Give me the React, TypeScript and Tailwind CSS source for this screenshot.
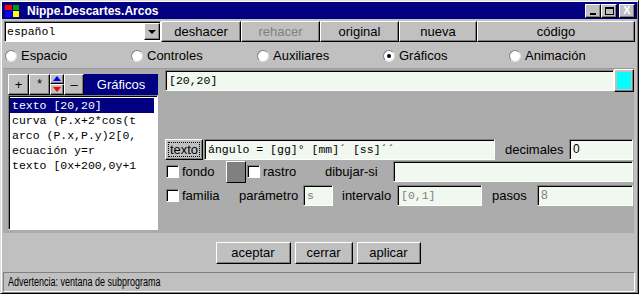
import type { ReactNode } from 'react';

const raised =
  'border border-t-white border-l-white border-r-black border-b-black shadow-[inset_-1px_-1px_0_#808080] bg-[#c0c0c0]';
const sunken =
  'border border-t-[#808080] border-l-[#808080] border-r-white border-b-white shadow-[inset_1px_1px_0_#000]';

function Btn({ w, children, disabled, className = '' }: { w: string; children: ReactNode; disabled?: boolean; className?: string }) {
  return (
    <div className={`${raised} ${w} flex items-center justify-center ${disabled ? 'text-[#808080]' : 'text-black'} ${className}`}>
      {children}
    </div>
  );
}

function Field({ w, children, gray, mono = true }: { w: string; children?: ReactNode; gray?: boolean; mono?: boolean }) {
  return (
    <div
      className={`${sunken} ${w} h-[21px] bg-[#f0f8f0] flex items-center pl-[3px] overflow-hidden whitespace-nowrap ${gray ? 'text-[#808080]' : 'text-black'} ${mono ? "font-['Liberation_Mono',monospace] text-[11.5px]" : 'text-[12px]'}`}
    >
      {children}
    </div>
  );
}

function Radio({ label, checked }: { label: string; checked?: boolean }) {
  return (
    <div className="flex items-center gap-[4px]">
      <div className="w-[12px] h-[12px] rounded-full bg-white border border-t-[#808080] border-l-[#808080] border-r-[#dfdfdf] border-b-[#dfdfdf] flex items-center justify-center">
        {checked && <div className="w-[4px] h-[4px] rounded-full bg-black" />}
      </div>
      <span>{label}</span>
    </div>
  );
}

function Check() {
  return <div className={`${sunken} w-[13px] h-[13px] bg-white`} />;
}

const items = ['texto [20,20]', 'curva (P.x+2*cos(t', 'arco (P.x,P.y)2[0,', 'ecuación y=r', 'texto [0x+200,0y+1'];

export default function App() {
  return (
    <div className="w-[639px] h-[294px] bg-[#c0c0c0] border border-t-[#dfdfdf] border-l-[#dfdfdf] border-r-black border-b-black shadow-[inset_1px_1px_0_#fff,inset_-1px_-1px_0_#808080] p-[1px] flex flex-col font-['Liberation_Sans',Arial,sans-serif] text-[13px] text-black overflow-hidden">
      {/* title bar */}
      <div className="h-[17px] bg-[#000080] flex items-center text-white">
        <div className="ml-[2px] w-[16px] h-[14px] grid grid-cols-2 gap-[1px] p-[1px]">
          <div className="bg-[#ff0000]" />
          <div className="bg-[#00a000]" />
          <div className="bg-[#0000ff]" />
          <div className="bg-[#ffff00]" />
        </div>
        <span className="ml-[7px] font-bold text-[12px]">Nippe.Descartes.Arcos</span>
        <div className="ml-auto mr-[2px] flex items-center">
          <div className={`${raised} w-[16px] h-[14px] flex items-end justify-center pb-[2px]`}>
            <div className="w-[6px] h-[2px] bg-black" />
          </div>
          <div className={`${raised} w-[16px] h-[14px] flex items-center justify-center`}>
            <div className="w-[9px] h-[8px] border border-black border-t-2" />
          </div>
          <div className={`${raised} ml-[2px] w-[16px] h-[14px] flex items-center justify-center text-[11px] font-bold leading-none`}>
            X
          </div>
        </div>
      </div>

      {/* toolbar */}
      <div className="mt-[2px] ml-[2px] h-[21px] flex">
        <div className={`${sunken} w-[157px] h-[21px] bg-white flex items-center`}>
          <span className="flex-1 pl-[2px] font-['Liberation_Mono',monospace] text-[11.5px]">español</span>
          <div className={`${raised} w-[16px] h-[17px] flex items-center justify-center`}>
            <div className="w-0 h-0 border-l-[4px] border-r-[4px] border-t-[4px] border-l-transparent border-r-transparent border-t-black" />
          </div>
        </div>
        <Btn w="w-[80px]">deshacer</Btn>
        <Btn w="w-[79px]" disabled>rehacer</Btn>
        <Btn w="w-[79px]">original</Btn>
        <Btn w="w-[78px]">nueva</Btn>
        <Btn w="w-[158px]">código</Btn>
      </div>

      {/* radios */}
      <div className="mt-[2px] h-[24px] pl-[3px] grid grid-cols-[126px_126px_126px_126px_126px] items-center">
        <Radio label="Espacio" />
        <Radio label="Controles" />
        <Radio label="Auxiliares" />
        <Radio label="Gráficos" checked />
        <Radio label="Animación" />
      </div>

      {/* panel */}
      <div className="ml-[1px] w-[631px] h-[166px] bg-[#acacac] border-t border-[#9a9a9a] flex items-start">
        <div className="ml-[5px] mt-[5px] w-[150px] flex flex-col">
          <div className="h-[21px] flex">
            <Btn w="w-[21px]">+</Btn>
            <Btn w="w-[21px]" className="text-[12px]">*</Btn>
            <div className="w-[14px] h-[21px] flex flex-col">
              <div className={`${raised} h-[10px] flex items-center justify-center`}>
                <div className="w-0 h-0 border-l-[4px] border-r-[4px] border-b-[5px] border-l-transparent border-r-transparent border-b-[#0000ff]" />
              </div>
              <div className={`${raised} h-[11px] flex items-center justify-center`}>
                <div className="w-0 h-0 border-l-[4px] border-r-[4px] border-t-[5px] border-l-transparent border-r-transparent border-t-[#ff0000]" />
              </div>
            </div>
            <Btn w="w-[20px]">–</Btn>
            <div className="flex-1 bg-[#000080] text-white flex items-center justify-center">Gráficos</div>
          </div>
          <div className={`${sunken} h-[135px] bg-white pt-[2px] pl-[1px] overflow-hidden font-['Liberation_Mono',monospace] text-[11.5px]`}>
            {items.map((it, i) => (
              <div
                key={i}
                className={`h-[15px] leading-[15px] pl-[2px] whitespace-nowrap ${i === 0 ? 'bg-[#000080] text-white w-[144px]' : ''}`}
              >
                {it}
              </div>
            ))}
          </div>
        </div>

        <div className="ml-[7px] w-[469px] flex flex-col">
          <div className="h-[23px] flex items-center">
            <Field w="w-[449px]">[20,20]</Field>
            <div className={`${raised} w-[20px] h-[23px] p-[2px]`}>
              <div className="w-full h-full bg-[#00ffff]" />
            </div>
          </div>

          <div className="mt-[47px] h-[21px] flex items-center">
            <div className={`${raised} w-[38px] h-[21px] p-[2px]`}>
              <div className="w-full h-full border border-dotted border-black flex items-center justify-center">texto</div>
            </div>
            <div className="ml-[1px]">
              <Field w="w-[291px]">ángulo = [gg]° [mm]´ [ss]´´</Field>
            </div>
            <span className="ml-[10px] w-[64px]">decimales</span>
            <Field w="w-[64px]" mono={false}>0</Field>
          </div>

          <div className="mt-[1px] h-[22px] flex items-center">
            <div className="ml-[1px]"><Check /></div>
            <span className="ml-[3px] w-[44px]">fondo</span>
            <div className={`${raised} w-[20px] h-[22px] !bg-[#808080]`} />
            <div className="ml-[1px]"><Check /></div>
            <span className="ml-[3px] w-[62px]">rastro</span>
            <span className="w-[68px]">dibujar-si</span>
            <Field w="w-[240px]" />
          </div>

          <div className="mt-[2px] h-[21px] flex items-center">
            <div className="ml-[1px]"><Check /></div>
            <span className="ml-[3px] w-[57px]">familia</span>
            <span className="w-[64px]">parámetro</span>
            <Field w="w-[30px]" gray>s</Field>
            <span className="ml-[9px] w-[55px]">intervalo</span>
            <Field w="w-[85px]" gray>[0,1]</Field>
            <span className="ml-[10px] w-[45px]">pasos</span>
            <Field w="w-[96px]" gray mono={false}>8</Field>
          </div>
        </div>
      </div>

      {/* bottom buttons */}
      <div className="h-[37px] pt-[9px] flex justify-center">
        <div className="ml-[-3px] flex gap-[4px] h-[22px]">
          <Btn w="w-[75px]">aceptar</Btn>
          <Btn w="w-[58px]">cerrar</Btn>
          <Btn w="w-[64px]">aplicar</Btn>
        </div>
      </div>

      {/* status bar */}
      <div className="mt-[2px] ml-[1px] w-[632px] h-[20px] border border-t-[#808080] border-l-[#808080] border-r-white border-b-white flex items-center pl-[4px] overflow-hidden whitespace-nowrap">
        <span className="inline-block origin-left scale-x-[0.72] text-[12.5px]">Advertencia: ventana de subprograma</span>
      </div>
    </div>
  );
}
